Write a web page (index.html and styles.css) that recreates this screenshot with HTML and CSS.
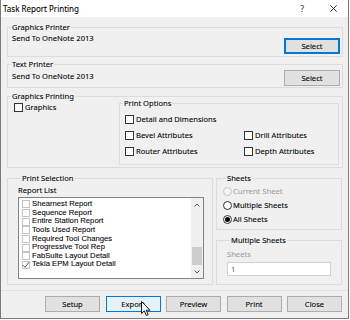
FILE: index.html
```html
<!DOCTYPE html>
<html lang="en">
<head>
<meta charset="UTF-8">
<meta name="viewport" content="width=device-width, initial-scale=1.0">
<link rel="stylesheet" href="styles.css">
<title>Task Report Printing</title>
</head>
<body>

<div class="dialog">

<div class="titleBar">
<span class="titleText">Task Report Printing</span>
<span class="titleBtns">
<span class="helpBtn">?</span>
<svg class="closeIcon" width="7" height="7" viewBox="0 0 7 7"><path d="M0.3 0.3L6.7 6.7M6.7 0.3L0.3 6.7" stroke="#222" stroke-width="0.9"/></svg>
</span>
</div>

<div class="content">

<fieldset class="group printerGroup">
<legend>Graphics Printer</legend>
<div class="printerRow">
<span class="printerName">Send To OneNote 2013</span>
<button class="btn selectBtn focusBtn">Select</button>
</div>
</fieldset>

<fieldset class="group printerGroup textPrinter">
<legend>Text Printer</legend>
<div class="printerRow">
<span class="printerName">Send To OneNote 2013</span>
<button class="btn selectBtn">Select</button>
</div>
</fieldset>

<fieldset class="group graphicsGroup">
<legend>Graphics Printing</legend>
<div class="graphicsRow">
<label class="checkRow graphicsCheck"><span class="checkBox"></span>Graphics</label>

<fieldset class="group optionsGroup">
<legend>Print Options</legend>
<div class="optionsGrid">
<label class="checkRow"><span class="checkBox"></span>Detail and Dimensions</label>
<span></span>
<label class="checkRow"><span class="checkBox"></span>Bevel Attributes</label>
<label class="checkRow"><span class="checkBox"></span>Drill Attributes</label>
<label class="checkRow"><span class="checkBox"></span>Router Attributes</label>
<label class="checkRow"><span class="checkBox"></span>Depth Attributes</label>
</div>
</fieldset>
</div>
</fieldset>

<div class="bottomRow">

<fieldset class="group selectionGroup">
<legend>Print Selection</legend>
<div class="listLabel">Report List</div>
<div class="listBox">
<ul class="reportList">
<li><span class="listCheck"></span>Shearnest Report</li>
<li><span class="listCheck"></span>Sequence Report</li>
<li><span class="listCheck"></span>Entire Station Report</li>
<li><span class="listCheck"></span>Tools Used Report</li>
<li><span class="listCheck"></span>Required Tool Changes</li>
<li><span class="listCheck"></span>Progressive Tool Rep</li>
<li><span class="listCheck"></span>FabSuite Layout Detail</li>
<li><span class="listCheck"><svg width="8" height="8" viewBox="0 0 8 8"><path d="M1 4.2L3 6.3L7 1.2" fill="none" stroke="#444" stroke-width="0.9"/></svg></span>Tekla EPM Layout Detail</li>
</ul>
<div class="scrollBar">
<span class="scrollArrow"><svg width="6" height="4" viewBox="0 0 6 4"><path d="M0.5 3.5L3 1L5.5 3.5" fill="none" stroke="#555" stroke-width="1"/></svg></span>
<span class="scrollThumb"></span>
<span class="scrollArrow"><svg width="6" height="4" viewBox="0 0 6 4"><path d="M0.5 0.5L3 3L5.5 0.5" fill="none" stroke="#555" stroke-width="1"/></svg></span>
</div>
</div>
</fieldset>

<div class="sideColumn">

<fieldset class="group sheetsGroup">
<legend>Sheets</legend>
<label class="radioRow disabled"><span class="radio"></span>Current Sheet</label>
<label class="radioRow"><span class="radio"></span>Multiple Sheets</label>
<label class="radioRow"><span class="radio checked"></span>All Sheets</label>
</fieldset>

<fieldset class="group multiGroup">
<legend>Multiple Sheets</legend>
<div class="sheetsLabel">Sheets</div>
<div class="sheetsInput">1</div>
</fieldset>

</div>
</div>

</div>

<div class="footer">
<button class="btn footBtn">Setup</button>
<span class="hoverWrap">
<button class="btn footBtn hoverBtn">Export</button>
<svg class="cursor" width="10" height="16" viewBox="0 0 10 16"><path d="M0.5 0.5L0.5 12.5L3.3 9.8L5.3 14.5L7.2 13.7L5.2 9.2L9 9.2Z" fill="#fff" stroke="#000" stroke-width="0.9" stroke-linejoin="round"/></svg>
</span>
<button class="btn footBtn">Preview</button>
<button class="btn footBtn">Print</button>
<button class="btn footBtn">Close</button>
</div>

</div>

</body>
</html>
```
FILE: styles.css
```css
*,*:before,*:after{
margin:0;
padding:0;
box-sizing:border-box;
}

:root{
--bg:#f0f0f0;
--groupLine:#dcdcdc;
--btnBg:#e1e1e1;
--btnLine:#adadad;
--blue:#0078d7;
--disabled:#a0a0a0;
}

body{
background:#fff;
font-family:"Noto Sans", sans-serif;
font-size:7.6px;
color:#000;
-webkit-text-stroke:0.08px currentColor;
}

.dialog{
width:349px;
height:319px;
background:var(--bg);
border:1px solid #7a7a7a;
border-top:none;
display:flex;
flex-direction:column;
}

.titleBar{
height:17px;
background:#fff;
display:flex;
align-items:center;
justify-content:space-between;
padding:0 11px 0 2px;
font-size:8px;
}

.titleBtns{
display:flex;
align-items:center;
gap:26px;
}

.helpBtn{
font-size:8px;
color:#333;
}

.content{
padding:6px 5px 0 6px;
}

/* group boxes */
.group{
border:1px solid var(--groupLine);
min-width:0;
}

.group > legend{
margin-left:3px;
padding:0 1px;
line-height:8px;
}

.printerRow{
display:flex;
justify-content:space-between;
align-items:flex-start;
padding:0 2px 2px 4px;
}

.printerName{
line-height:10px;
margin-top:2px;
}

.btn{
font-family:inherit;
font-size:inherit;
color:#000;
background:var(--btnBg);
border:1px solid var(--btnLine);
height:16px;
}

.selectBtn{
width:56px;
margin-top:7px;
}

.focusBtn{
border:2px solid var(--blue);
}

.textPrinter{
margin-top:3px;
}

.textPrinter .printerRow{
padding-bottom:1px;
}

.textPrinter .printerName{
margin-top:3px;
}

.textPrinter .selectBtn{
margin-top:2px;
}

/* graphics printing */
.graphicsGroup{
margin-top:4px;
}

.graphicsRow{
display:flex;
align-items:flex-start;
padding:0 3px 2px 6px;
}

.checkRow{
display:flex;
align-items:center;
gap:2px;
height:16px;
}

.graphicsCheck{
height:10px;
margin-top:2px;
}

.checkBox{
width:9px;
height:9px;
background:#fff;
border:1px solid #333;
}

.optionsGroup{
width:220px;
margin:-1px 0 0 auto;
}

.optionsGrid{
display:grid;
grid-template-columns:119px auto;
padding:4px 0 5px 5px;
}

/* print selection */
.bottomRow{
display:flex;
gap:3px;
margin-top:6px;
}

.selectionGroup{
width:206px;
padding:0 0 5px 10px;
}

.listLabel{
line-height:10px;
margin-top:3px;
}

.listBox{
margin-top:2px;
width:186px;
height:82px;
background:#fff;
border:1px solid #828282;
display:flex;
}

.reportList{
list-style:none;
flex:1;
padding:2px 0 0 3px;
font-family:"Liberation Sans", Arial, sans-serif;
font-size:7.7px;
}

.reportList li{
display:flex;
align-items:center;
gap:2px;
height:8.65px;
line-height:8.65px;
}

.listCheck{
width:8px;
height:8px;
border:1px solid #c4c4c4;
display:flex;
align-items:center;
justify-content:center;
}

.listCheck svg{
flex:none;
}

.scrollBar{
width:12px;
background:#f0f0f0;
display:flex;
flex-direction:column;
}

.scrollArrow{
height:13px;
display:flex;
align-items:center;
justify-content:center;
}

.scrollThumb{
height:18px;
margin-top:auto;
margin-left:1px;
margin-right:1px;
background:#cdcdcd;
}

.sideColumn{
width:126px;
display:flex;
flex-direction:column;
}

.sheetsGroup{
padding:2px 0 3px 6px;
}

.radioRow{
display:flex;
align-items:center;
gap:1px;
height:14px;
}

.radio{
width:9px;
height:9px;
border-radius:50%;
border:1px solid #333;
background:#fff;
display:flex;
align-items:center;
justify-content:center;
}

.radio.checked:after{
content:"";
width:5px;
height:5px;
border-radius:50%;
background:#000;
}

.disabled{
color:var(--disabled);
}

.disabled .radio{
border-color:#c8c8c8;
background:#f4f4f4;
}

.multiGroup{
flex:1;
margin-top:6px;
padding:0 0 0 10px;
}

.sheetsLabel{
color:var(--disabled);
line-height:10px;
margin-top:5px;
}

.sheetsInput{
margin-top:3px;
width:104px;
height:14px;
background:#fff;
border:1px solid #d2d2d2;
color:#6d6d6d;
line-height:12px;
padding-left:3px;
}

/* footer buttons */
.footer{
margin-top:5px;
border-top:1px solid #e2e2e2;
padding:5px 6px 0 0;
display:flex;
justify-content:flex-end;
gap:5.5px;
}

.footBtn{
width:55px;
}

.hoverWrap{
position:relative;
display:flex;
}

.hoverBtn{
background:#e5f1fb;
border-color:var(--blue);
}

.cursor{
position:absolute;
left:35px;
top:5px;
}
```
